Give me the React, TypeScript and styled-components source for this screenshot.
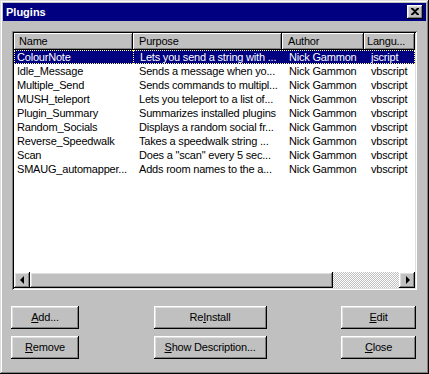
import React from "react";
import styled, { createGlobalStyle } from "styled-components";

const GlobalStyle = createGlobalStyle`
  html, body { margin: 0; padding: 0; background: #c0c0c0; }
  * { box-sizing: border-box; }
`;

const raised = `box-shadow: inset -1px -1px #000, inset 1px 1px #fff, inset -2px -2px #808080, inset 2px 2px #dfdfdf;`;

const Window = styled.div`
  width: 429px;
  height: 374px;
  background: #c0c0c0;
  padding: 3px;
  box-shadow: inset -1px -1px #000, inset 1px 1px #dfdfdf, inset -2px -2px #808080, inset 2px 2px #fff;
  display: flex;
  flex-direction: column;
  font-family: "Liberation Sans", Arial, sans-serif;
  font-size: 11px;
  letter-spacing: -0.2px;
  color: #000;
`;

const TitleBar = styled.div`
  height: 18px;
  background: #000080;
  color: #fff;
  font-weight: bold;
  letter-spacing: 0;
  display: flex;
  align-items: center;
  justify-content: space-between;
  padding: 0 3px 0 3px;
`;

const TitleText = styled.span`
  line-height: 18px;
`;

const CloseButton = styled.div`
  width: 16px;
  height: 14px;
  background: #c0c0c0;
  ${raised}
  display: flex;
  align-items: center;
  justify-content: center;
  padding-right: 1px;
  padding-bottom: 1px;
`;

const Client = styled.div`
  flex: 1;
  display: flex;
  flex-direction: column;
  padding: 10px 9px 0 9px;
`;

const ListView = styled.div`
  height: 259px;
  padding: 2px;
  background: #fff;
  box-shadow: inset 1px 1px #808080, inset -1px -1px #fff, inset 2px 2px #000, inset -2px -2px #dfdfdf;
  display: flex;
  flex-direction: column;
`;

const HeaderRow = styled.div`
  display: flex;
  height: 17px;
  background: #c0c0c0;
`;

const HeaderCell = styled.div<{ $w: number; $pad: number }>`
  width: ${(p) => p.$w}px;
  flex: none;
  height: 17px;
  line-height: 16px;
  padding-left: ${(p) => p.$pad}px;
  white-space: nowrap;
  overflow: hidden;
  box-shadow: inset -1px -1px #000, inset 1px 1px #fff, inset -2px -2px #808080;
`;

const HeaderFiller = styled.div`
  flex: 1;
  background: #fff;
`;

const Body = styled.div`
  flex: 1;
  background: #fff;
  overflow: hidden;
`;

const Row = styled.div<{ $selected?: boolean }>`
  display: grid;
  grid-template-columns: 119px 149px 82px 51px;
  height: 14px;
  line-height: 14px;
  background: ${(p) => (p.$selected ? "#000080" : "transparent")};
  color: ${(p) => (p.$selected ? "#fff" : "#000")};
  outline: ${(p) => (p.$selected ? "1px dotted #ffff90" : "none")};
  outline-offset: -1px;
`;

const Cell = styled.div<{ $pad: number; $sep?: boolean }>`
  padding-left: ${(p) => p.$pad}px;
  white-space: nowrap;
  overflow: hidden;
  border-left: ${(p) => (p.$sep ? "1px dotted #ffff90" : "none")};
`;

const ScrollBar = styled.div`
  height: 16px;
  display: flex;
`;

const ArrowButton = styled.div`
  width: 16px;
  height: 16px;
  flex: none;
  background: #c0c0c0;
  ${raised}
  display: flex;
  align-items: center;
  justify-content: center;
`;

const Triangle = styled.div<{ $dir: "left" | "right" }>`
  width: 0;
  height: 0;
  border-top: 4px solid transparent;
  border-bottom: 4px solid transparent;
  ${(p) =>
    p.$dir === "left"
      ? "border-right: 4px solid #000; margin-right: 1px;"
      : "border-left: 4px solid #000; margin-left: 1px;"}
`;

const Track = styled.div`
  flex: 1;
  display: flex;
  background: repeating-conic-gradient(#c0c0c0 0 25%, #fff 0 50%) 0 0 / 2px 2px;
`;

const Thumb = styled.div<{ $w: number }>`
  width: ${(p) => p.$w}px;
  height: 16px;
  background: #c0c0c0;
  ${raised}
`;

const ButtonGrid = styled.div`
  margin: 16px 1px 0 -1px;
  display: grid;
  grid-template-columns: 68px 113px 75px;
  grid-auto-rows: 23px;
  justify-content: space-between;
  row-gap: 7px;
`;

const Button = styled.div`
  background: #c0c0c0;
  ${raised}
  display: flex;
  align-items: center;
  justify-content: center;
  white-space: nowrap;
  padding-bottom: 1px;
`;

const Key = styled.span`
  text-decoration: underline;
  text-underline-offset: 1px;
`;

const columns = [
  { label: "Name", w: 119, pad: 5 },
  { label: "Purpose", w: 149, pad: 6 },
  { label: "Author", w: 82, pad: 6 },
  { label: "Langu...", w: 51, pad: 3 },
];

const rows = [
  ["ColourNote", "Lets you send a string with ...", "Nick Gammon", "jscript"],
  ["Idle_Message", "Sends a message when yo...", "Nick Gammon", "vbscript"],
  ["Multiple_Send", "Sends commands to multipl...", "Nick Gammon", "vbscript"],
  ["MUSH_teleport", "Lets you teleport to a list of...", "Nick Gammon", "vbscript"],
  ["Plugin_Summary", "Summarizes installed plugins", "Nick Gammon", "vbscript"],
  ["Random_Socials", "Displays a random social fr...", "Nick Gammon", "vbscript"],
  ["Reverse_Speedwalk", "Takes a speedwalk string ...", "Nick Gammon", "vbscript"],
  ["Scan", 'Does a "scan" every 5 sec...', "Nick Gammon", "vbscript"],
  ["SMAUG_automapper...", "Adds room names to the a...", "Nick Gammon", "vbscript"],
];

const cellPads = [3, 6, 7, 7];

export default function App() {
  return (
    <>
      <GlobalStyle />
      <Window>
        <TitleBar>
          <TitleText>Plugins</TitleText>
          <CloseButton>
            <svg width="8" height="7" viewBox="0 0 8 7">
              <path d="M0 0h2l2 2 2-2h2v1L5 3.5 8 6v1H6L4 5 2 7H0V6l3-2.5L0 1z" fill="#000" />
            </svg>
          </CloseButton>
        </TitleBar>
        <Client>
          <ListView>
            <HeaderRow>
              {columns.map((c) => (
                <HeaderCell key={c.label} $w={c.w} $pad={c.pad}>
                  {c.label}
                </HeaderCell>
              ))}
              <HeaderFiller />
            </HeaderRow>
            <Body>
              {rows.map((r, i) => (
                <Row key={r[0]} $selected={i === 0}>
                  {r.map((t, j) => (
                    <Cell key={j} $pad={cellPads[j]} $sep={i === 0 && j === 1}>
                      {t}
                    </Cell>
                  ))}
                </Row>
              ))}
            </Body>
            <ScrollBar>
              <ArrowButton>
                <Triangle $dir="left" />
              </ArrowButton>
              <Track>
                <Thumb $w={303} />
              </Track>
              <ArrowButton>
                <Triangle $dir="right" />
              </ArrowButton>
            </ScrollBar>
          </ListView>
          <ButtonGrid>
            <Button>
              <Key>A</Key>dd...
            </Button>
            <Button>
              Re<Key>I</Key>nstall
            </Button>
            <Button>
              <Key>E</Key>dit
            </Button>
            <Button>
              <Key>R</Key>emove
            </Button>
            <Button>
              <Key>S</Key>how Description...
            </Button>
            <Button>
              <Key>C</Key>lose
            </Button>
          </ButtonGrid>
        </Client>
      </Window>
    </>
  );
}
